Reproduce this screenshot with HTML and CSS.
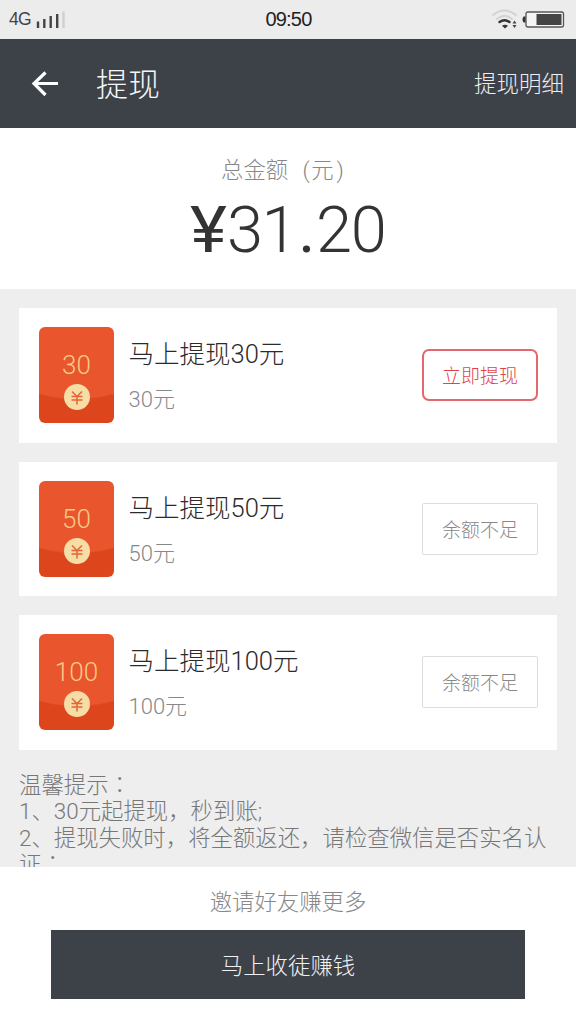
FILE: index.html
```html
<!DOCTYPE html>
<html lang="zh-CN">
<head>
<meta charset="utf-8">
<title>提现</title>
<link rel="stylesheet" href="styles.css">
</head>
<body>
<div class="screen">
  <div class="status">
    <div class="network"><span>4G</span>
      <svg width="30" height="20" viewBox="0 0 30 20"><path d="M2 11.500v6.500M8.300 9v9M14.700 6v12M21.200 4v14" stroke="#444" stroke-width="2.400"/><path d="M27.500 1.500V18" stroke="#d0d0d0" stroke-width="2.400"/></svg>
    </div>
    <span class="clock">09:50</span>
    <svg class="indicators" width="76" height="24" viewBox="0 0 76 24">
      <g fill="none" stroke-linecap="round"><path d="M1 7Q12 -2 24 7M5 11Q12.500 4.500 20 11" stroke="#d2d2d2" stroke-width="1.900"/><path d="M7.500 14Q12.500 10.500 17.500 14" stroke="#333" stroke-width="2.400"/></g>
      <path d="M10 17.800Q13 15.800 16 17.800L13 20.500Z" fill="#333"/>
      <path d="M20.500 15.500l2-3 2 3zM20.500 17l2 3 2-3z" fill="#444"/>
      <rect x="34" y="4" width="37.500" height="15" rx="2" fill="#f4f4f4" stroke="#555" stroke-width="1.300"/>
      <rect x="44.500" y="6" width="25" height="11" fill="#444"/><path d="M33.500 8.500h-2q-2 3 0 6h2z" fill="#333"/>
    </svg>
  </div>
  <header class="topbar">
    <svg class="back" width="28" height="28" viewBox="0 0 28 28"><path d="M14.500 2.500L3 13.500l11.500 11.500M3.500 13.500H27" fill="none" stroke="#fff" stroke-width="3.200"/></svg>
    <h1>提现</h1><a class="history">提现明细</a>
  </header>
  <section class="balance">
    <p class="balance-label">总金额<span class="paren open">(</span>元<span class="paren close">)</span></p>
    <p class="amount"><span class="yen">¥</span><span>31</span><span class="dot">.</span><span>20</span></p>
  </section>
  <main class="options">
    <article class="card">
      <div class="packet"><span class="value">30</span><svg class="coin" viewBox="0 0 26 26"><circle cx="13" cy="13" r="13" fill="#f5dda5"/><path d="M8 7.500l5 5 5-5M13 12.500v8M7.500 12.500h11M7.500 16h11" fill="none" stroke="#e56438" stroke-width="1.500"/></svg></div>
      <div class="info"><h2>马上提现30元</h2><p>30元</p></div>
      <button class="action active">立即提现</button>
    </article>
    <article class="card">
      <div class="packet"><span class="value">50</span><svg class="coin" viewBox="0 0 26 26"><circle cx="13" cy="13" r="13" fill="#f5dda5"/><path d="M8 7.500l5 5 5-5M13 12.500v8M7.500 12.500h11M7.500 16h11" fill="none" stroke="#e56438" stroke-width="1.500"/></svg></div>
      <div class="info"><h2>马上提现50元</h2><p>50元</p></div>
      <button class="action">余额不足</button>
    </article>
    <article class="card">
      <div class="packet"><span class="value">100</span><svg class="coin" viewBox="0 0 26 26"><circle cx="13" cy="13" r="13" fill="#f5dda5"/><path d="M8 7.500l5 5 5-5M13 12.500v8M7.500 12.500h11M7.500 16h11" fill="none" stroke="#e56438" stroke-width="1.500"/></svg></div>
      <div class="info"><h2>马上提现100元</h2><p>100元</p></div>
      <button class="action">余额不足</button>
    </article>
    <div class="tips"><p>温馨提示<span class="mark" lang="zh-TW">：</span></p><p>1、30元起提现，秒到账;</p><p>2、提现失败时，将全额返还，请检查微信是否实名认证<span class="mark" lang="zh-TW">；</span></p></div>
  </main>
  <footer class="invite"><p>邀请好友赚更多</p><button class="invite-button">马上收徒赚钱</button></footer>
</div>
</body>
</html>
```
FILE: styles.css
```css
* { box-sizing: border-box; }
body, h1, h2, p { margin: 0; font-weight: 300; }
body { font-family: Roboto, "Noto Sans CJK SC", sans-serif; background: #fff; }
button { font: inherit; padding: 0; }
.screen { width: 576px; height: 1024px; display: flex; flex-direction: column; overflow: hidden; }
.status { height: 39px; flex: none; display: grid; grid-template-columns: 1fr auto 1fr; align-items: center; background: #ececec; padding: 0 8px 0 9px; color: #444; }
.network { display: flex; align-items: center; gap: 5px; font: 400 17.5px "Liberation Sans", sans-serif; letter-spacing: -.7px; }
.clock { font: 400 20px "Liberation Sans", sans-serif; letter-spacing: -.8px; color: #222; }
.indicators { justify-self: end; }
.topbar { height: 89px; flex: none; display: flex; align-items: center; background: #3d4148; color: #f5f6f8; padding: 0 12px 0 31px; }
.topbar h1 { font-size: 32px; line-height: 44px; margin-left: 37px; padding-top: 2px; }
.history { margin-left: auto; font-size: 22.5px; line-height: 32px; color: #eceef0; padding-top: 1px; }
.balance { height: 161px; flex: none; text-align: center; padding-top: 26px; }
.balance-label { display: flex; padding-left: 221px; font-size: 22.4px; line-height: 32px; color: #888; }
.paren.open { margin-left: 13px; width: 10px; }
.paren.close { margin-left: 3px; }
.amount { display: flex; padding: 6px 0 0 190px; font-size: 65px; line-height: 76px; letter-spacing: -1.5px; color: #333; }
.amount .yen { width: 37px; text-align: left; font-weight: 400; letter-spacing: 0; transform: scaleX(1.08); transform-origin: left; }
.amount .dot { width: 20px; text-align: center; font-weight: 400; }
.options { height: 578px; flex: none; background: #eee; padding: 19px 19px 0; display: flex; flex-direction: column; gap: 19px; overflow: hidden; }
.card { height: 134.5px; flex: none; background: #fff; display: flex; padding: 19px 19px 0 20px; }
.packet { width: 75px; height: 96px; flex: none; border-radius: 6px; background: radial-gradient(ellipse 100px 72px at 50% 0, #e9552d 99%, #dd451d 101%); display: flex; flex-direction: column; align-items: center; padding-top: 22px; }
.value { font-size: 26px; line-height: 32px; color: #f7ca87; }
.coin { width: 26px; height: 26px; margin-top: 3px; }
.info { margin-left: 14.5px; padding-top: 10px; }
.info h2 { font-size: 25.5px; line-height: 34px; color: #2b2b2b; }
.info p { font-size: 22px; line-height: 32px; color: #888; margin-top: 13px; }
.action { margin: 22px 0 0 auto; width: 116px; height: 52px; font-size: 19px; color: #888; background: #fff; border: 1px solid #ddd; border-radius: 2px; padding-bottom: 1px; }
.action.active { color: #e04448; border: 2px solid #e4686b; border-radius: 7px; padding-bottom: 2px; }
.tips { font-size: 22.4px; line-height: 26.6px; color: #777; padding-top: 3px; flex: none; }
.mark { font-family: "Noto Sans CJK TC", sans-serif; line-height: 0; }
.invite { flex: 1; display: flex; flex-direction: column; align-items: center; padding-top: 19px; }
.invite p { font-size: 22.4px; line-height: 32px; color: #888; }
.invite-button { width: 474px; height: 69px; margin-top: 12px; border: 0; background: #3d4148; color: #f0f1f3; font-size: 22.4px; padding-bottom: 2px; }
```
